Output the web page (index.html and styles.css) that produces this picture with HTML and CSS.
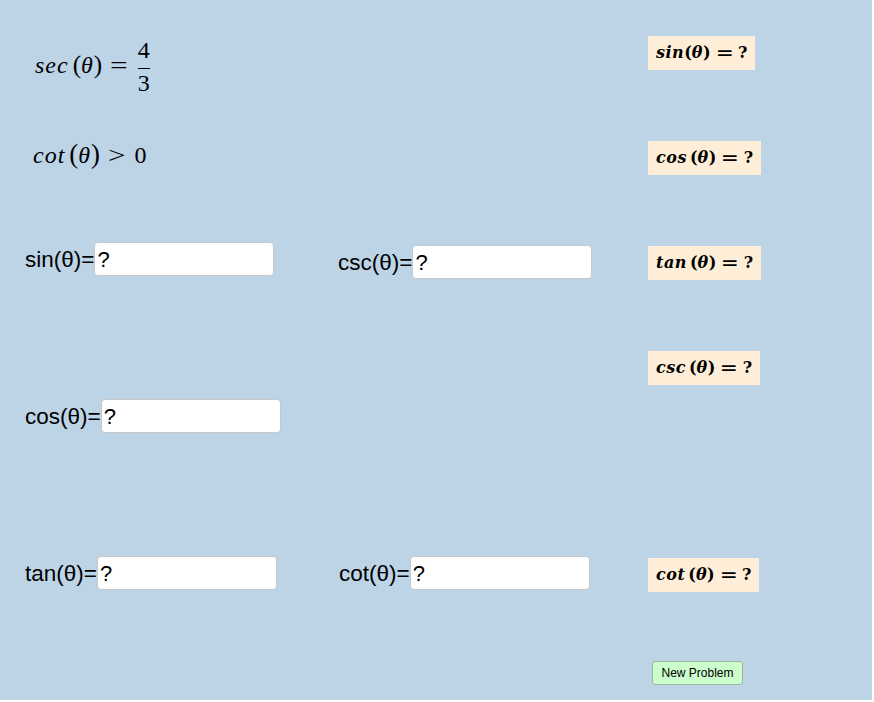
FILE: index.html
```html
<!DOCTYPE html>
<html>
<head>
  <meta charset="UTF-8">
  <title>Trig Ratios From Given Information</title>
  <link rel="stylesheet" href="styles.css">
</head>
<body>
  <div class="applet">
    <div class="work">
      <!-- Given facts -->
      <div class="given given-sec">
        <span class="mi fn">sec</span><span class="mo paren">(</span><span class="mi">θ</span><span class="mo paren">)</span><span class="mo rel">=</span><span class="frac"><span class="num">4</span><span class="bar"></span><span class="den">3</span></span>
      </div>
      <div class="given given-cot">
        <span class="mi fn">cot</span><span class="mo paren paren-lg">(</span><span class="mi">θ</span><span class="mo paren paren-lg">)</span><span class="mo rel">&gt;</span><span class="mo">0</span>
      </div>

      <!-- Answer inputs -->
      <div class="row row-1">
        <label class="field">sin(θ)=<input class="answer" type="text" value="?"></label>
        <label class="field field-low">csc(θ)=<input class="answer" type="text" value="?"></label>
      </div>
      <div class="row row-2">
        <label class="field">cos(θ)=<input class="answer" type="text" value="?"></label>
      </div>
      <div class="row row-3">
        <label class="field">tan(θ)=<input class="answer" type="text" value="?"></label>
        <label class="field field-right">cot(θ)=<input class="answer" type="text" value="?"></label>
      </div>
    </div>

    <!-- Hint chips -->
    <div class="answers">
      <div class="chip"><span class="mi">sin</span><span class="mo">(</span><span class="mi">θ</span><span class="mo">)</span><span class="mo rel">=</span><span class="mo">?</span></div>
      <div class="chip"><span class="mi fn">cos</span><span class="mo">(</span><span class="mi">θ</span><span class="mo">)</span><span class="mo rel">=</span><span class="mo">?</span></div>
      <div class="chip"><span class="mi fn">tan</span><span class="mo">(</span><span class="mi">θ</span><span class="mo">)</span><span class="mo rel">=</span><span class="mo">?</span></div>
      <div class="chip"><span class="mi fn">csc</span><span class="mo">(</span><span class="mi">θ</span><span class="mo">)</span><span class="mo rel">=</span><span class="mo">?</span></div>
      <div class="chip chip-cot"><span class="mi fn">cot</span><span class="mo">(</span><span class="mi">θ</span><span class="mo">)</span><span class="mo rel">=</span><span class="mo">?</span></div>
      <button class="new-problem" type="button">New Problem</button>
    </div>
  </div>
</body>
</html>
```

FILE: styles.css
```css
/* ========== PAGE ========== */
body {
  margin: 0;
  background: #ffffff;
}

.applet {
  display: flex;
  width: 872px;
  height: 700px;
  background: #bdd4e7;
  color: #000;
}

.work {
  width: 648px;
  flex: none;
  display: flex;
  flex-direction: column;
}

/* ========== GIVEN FACTS (math) ========== */
.given {
  font-family: "Liberation Serif", "Times New Roman", serif;
  font-size: 24px;
  line-height: 24px;
  white-space: nowrap;
}

.given-sec {
  margin-top: 38px;
  padding-left: 35px;
}

.given-cot {
  margin-top: 48px;
  padding-left: 33px;
}

.mi {
  font-style: italic;
}

.given .mi {
  letter-spacing: 1px;
}

.given .fn {
  margin-right: 4px;
}

.paren {
  font-size: 1.05em;
  line-height: 0;
}

.paren-lg {
  font-size: 1.12em;
}

.given .rel {
  display: inline-block;
  margin: 0 11px 0 10px;
  transform: scaleX(1.3);
}

.frac {
  display: inline-flex;
  flex-direction: column;
  align-items: center;
  vertical-align: 15px;
  line-height: 1;
  padding: 0 1px;
}

.num {
  margin-bottom: 6px;
}

.bar {
  align-self: stretch;
  height: 1px;
  background: #000;
}

.den {
  margin-top: 2px;
}

/* ========== INPUT ROWS ========== */
.row {
  display: grid;
  grid-template-columns: 313px auto;
  align-items: start;
  padding-left: 25px;
}

.row-1 { margin-top: 75px; }
.row-2 { margin-top: 120px; }
.row-3 { margin-top: 123px; }

.field {
  display: flex;
  align-items: baseline;
  font-family: "Liberation Sans", Arial, sans-serif;
  font-size: 22.5px;
}

.field-low { margin-top: 3px; }
.field-right { margin-left: 1px; }

.answer {
  width: 180px;
  height: 34px;
  box-sizing: border-box;
  padding: 2px 2px 0;
  border: 1px solid #c8c8c8;
  border-radius: 4px;
  background: #fff;
  font-family: "Liberation Sans", Arial, sans-serif;
  font-size: 22px;
  color: #000;
  outline: none;
}

/* ========== HINT CHIPS ========== */
.answers {
  display: flex;
  flex-direction: column;
  align-items: flex-start;
  padding-top: 36px;
}

.chip {
  height: 34px;
  line-height: 34px;
  padding: 0 8px;
  background: #ffeed7;
  font-family: "DejaVu Serif", serif;
  font-size: 16px;
  font-weight: bold;
  white-space: nowrap;
}

.chip + .chip {
  margin-top: 71px;
}

.chip .mi {
  letter-spacing: 0.5px;
}

.chip .fn {
  margin-right: 3px;
}

.chip .rel {
  display: inline-block;
  margin: 0 7px;
  transform: scaleX(1.35);
}

.chip.chip-cot {
  margin-top: 173px;
}

.new-problem {
  margin: 69px 0 0 4px;
  width: 91px;
  height: 24px;
  padding: 0;
  border: 1px solid #9db59d;
  border-radius: 3px;
  background: #ccfdcc;
  font-family: "Liberation Sans", Arial, sans-serif;
  font-size: 12px;
  color: #000;
}
```
